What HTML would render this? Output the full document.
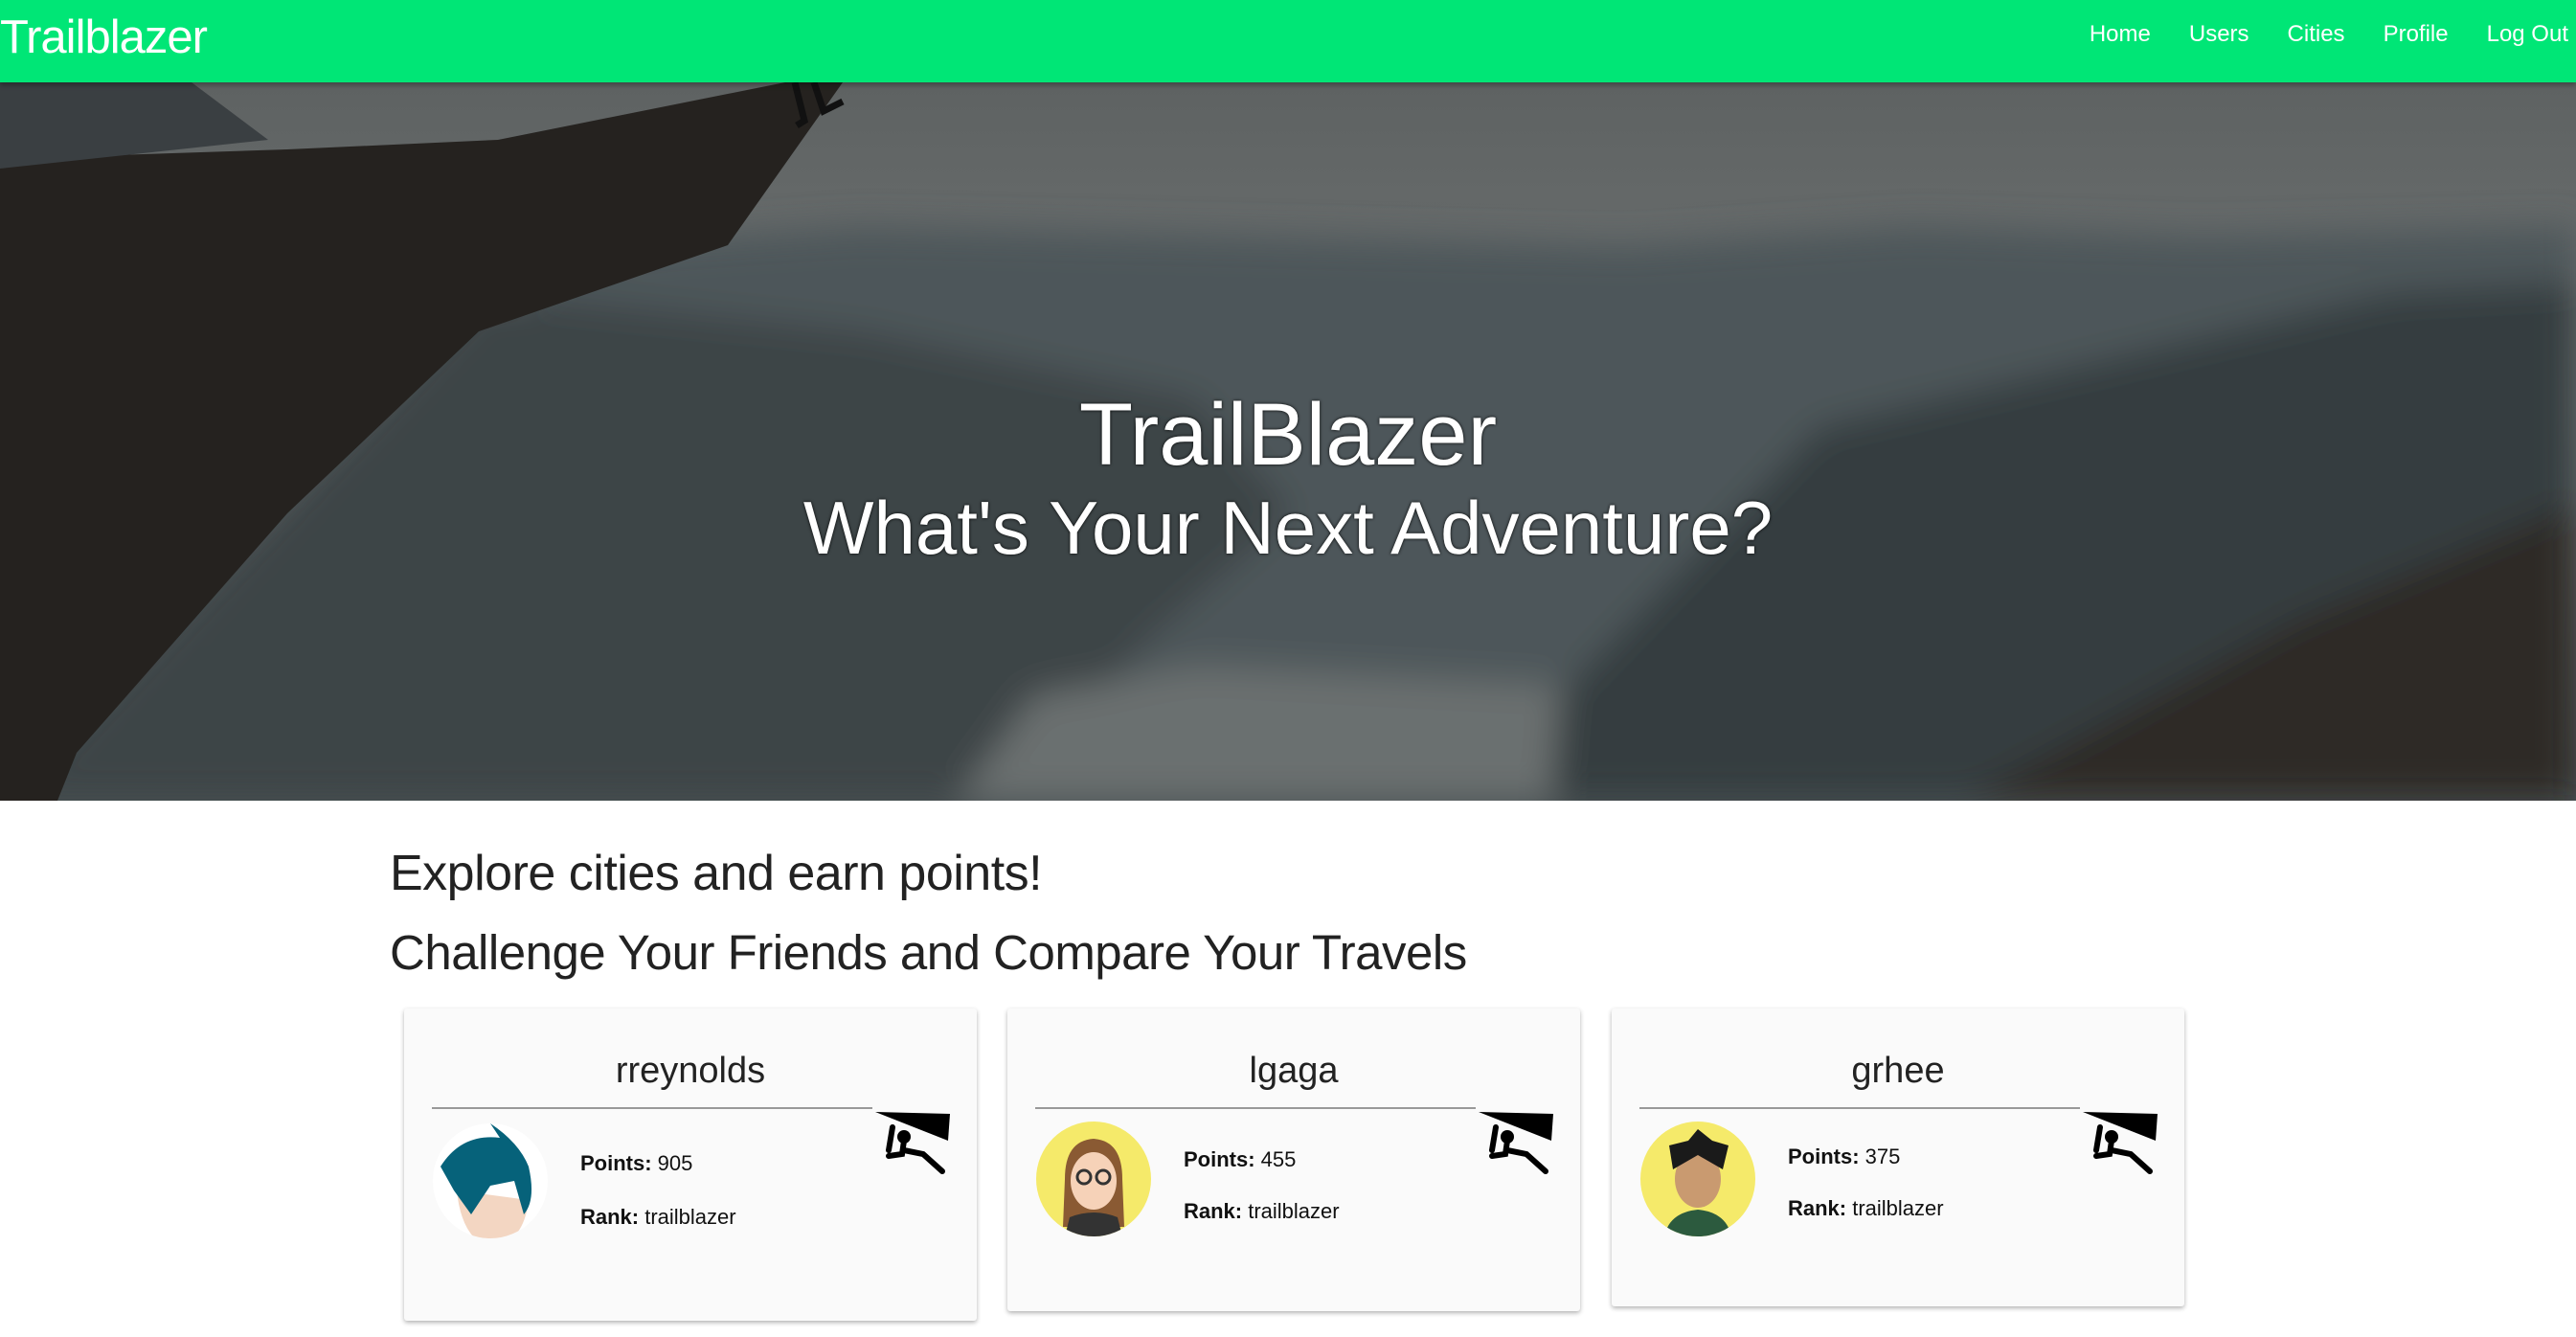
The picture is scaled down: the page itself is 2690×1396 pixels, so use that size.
<!DOCTYPE html>
<html><head><meta charset="utf-8"><style>
*{margin:0;padding:0;box-sizing:border-box}
body{width:2690px;height:1396px;background:#fff;font-family:"Liberation Sans",sans-serif;overflow:hidden;position:relative}
.nav{position:absolute;left:0;top:0;width:2690px;height:86px;background:#00e676;box-shadow:0 3px 5px rgba(0,0,0,.3);z-index:3}
.logo{position:absolute;left:0;top:11px;font-size:49px;color:#fff;letter-spacing:-1px}
.links{position:absolute;right:8px;top:22px;font-size:24px;color:#fff}
.links span{margin-left:40px}
.hero{position:absolute;left:0;top:86px;width:2690px;height:750px;overflow:hidden}
.ht{position:absolute;left:0;width:2690px;text-align:center;color:#fff;text-shadow:0 0 3px #000}
h2{position:absolute;left:407px;font-weight:normal;color:#222;letter-spacing:-0.5px}
.card{position:absolute;background:#fafafa;box-shadow:0 2px 5px rgba(0,0,0,.3);border-radius:3px;width:598px}
.name{position:absolute;left:0;width:598px;top:44px;text-align:center;font-size:38px;color:#222}
.line{position:absolute;left:29px;top:103px;width:460px;height:2px;background:#999}
.av{position:absolute;left:30px;width:120px;height:120px;border-radius:50%;overflow:hidden}
.t{position:absolute;left:184px;font-size:22px;color:#111}
.ic{position:absolute;left:492px;top:108px}
</style></head><body>
<div class="nav"><div class="logo">Trailblazer</div>
<div class="links"><span>Home</span><span>Users</span><span>Cities</span><span>Profile</span><span>Log Out</span></div></div>
<div class="hero">
<svg width="2690" height="750" viewBox="0 0 2690 750">
<defs><linearGradient id="s" x1="0" y1="0" x2="0" y2="1"><stop offset="0" stop-color="#5e6262"/><stop offset="0.45" stop-color="#6f7373"/><stop offset="1" stop-color="#4a5254"/></linearGradient>
<filter id="b"><feGaussianBlur stdDeviation="18"/></filter></defs>
<rect width="2690" height="750" fill="url(#s)"/>
<g filter="url(#b)">
<path d="M600 170 L900 150 L1300 160 L1700 170 L2000 150 L2300 160 L2690 150 L2690 750 L0 750 Z" fill="#4e575a"/>
<path d="M500 220 L900 260 L1250 330 L1350 450 L1200 580 L1050 750 L0 750 Z" fill="#3c4447"/>
<path d="M1620 750 L1620 650 L1900 360 L2200 290 L2500 220 L2690 210 L2690 750 Z" fill="#363d3f"/>
<path d="M2050 750 L2400 560 L2690 440 L2690 750 Z" fill="#2e2b27"/>
<path d="M1000 750 L1080 640 L1250 610 L1630 630 L1620 750 Z" fill="#6a7070"/>
</g>
<path d="M0 80 L300 70 L520 60 L820 0 L880 0 L760 170 L500 260 L300 450 L80 700 L60 750 L0 750 Z" fill="#25221f"/>
<path d="M0 0 L200 0 L280 60 L0 90 Z" fill="#3a3f42"/>
<path d="M830 0 L840 40 L832 45 M850 0 L860 30 L880 20" stroke="#111" stroke-width="7" fill="none"/>
</svg>
<div class="ht" style="top:316px;font-size:92px">TrailBlazer</div>
<div class="ht" style="top:420px;font-size:78px">What's Your Next Adventure?</div>
</div>
<h2 style="top:882px;font-size:52px">Explore cities and earn points!</h2>
<h2 style="top:965px;font-size:51px">Challenge Your Friends and Compare Your Travels</h2>

<div class="card" style="left:422px;top:1053px;height:326px">
<div class="name">rreynolds</div><div class="line"></div>
<div class="av" style="top:120px;background:#fff"><svg width="120" height="140" viewBox="0 0 120 140"><ellipse cx="60" cy="70" rx="55" ry="66" fill="#fff"/><path d="M25 70 Q30 120 60 130 Q95 125 100 80 Z" fill="#f3d6c2"/><path d="M8 45 Q30 10 70 15 L60 0 Q90 20 100 45 Q108 80 95 95 L85 60 L60 65 L40 95 L22 70 Z" fill="#06627a"/></svg></div>
<div class="t" style="top:149px"><b>Points:</b> 905</div>
<div class="t" style="top:205px"><b>Rank:</b> trailblazer</div>
<svg class="ic" width="78" height="66" viewBox="0 0 78 66"><path d="M0 0 L78 2 L76 30 Z" fill="#000"/><circle cx="30" cy="26" r="7" fill="#000"/><path d="M18 16 L14 40 M30 30 L28 44 L14 46 M30 40 L50 44 L70 62" stroke="#000" stroke-width="6" fill="none" stroke-linecap="round"/></svg>
</div>

<div class="card" style="left:1052px;top:1053px;height:316px">
<div class="name">lgaga</div><div class="line"></div>
<div class="av" style="top:118px;background:#f5ea6a"><svg width="120" height="120" viewBox="0 0 120 120"><path d="M30 60 Q30 20 60 18 Q90 20 90 60 L92 110 L28 110 Z" fill="#8a5a33"/><ellipse cx="60" cy="62" rx="24" ry="30" fill="#f6d2b8"/><circle cx="50" cy="58" r="7" fill="none" stroke="#333" stroke-width="3"/><circle cx="70" cy="58" r="7" fill="none" stroke="#333" stroke-width="3"/><path d="M35 100 Q60 90 85 100 L90 120 L30 120Z" fill="#333"/></svg></div>
<div class="t" style="top:145px"><b>Points:</b> 455</div>
<div class="t" style="top:199px"><b>Rank:</b> trailblazer</div>
<svg class="ic" width="78" height="66" viewBox="0 0 78 66"><path d="M0 0 L78 2 L76 30 Z" fill="#000"/><circle cx="30" cy="26" r="7" fill="#000"/><path d="M18 16 L14 40 M30 30 L28 44 L14 46 M30 40 L50 44 L70 62" stroke="#000" stroke-width="6" fill="none" stroke-linecap="round"/></svg>
</div>

<div class="card" style="left:1683px;top:1053px;height:311px">
<div class="name">grhee</div><div class="line"></div>
<div class="av" style="top:118px;background:#f5ea6a"><svg width="120" height="120" viewBox="0 0 120 120"><ellipse cx="60" cy="60" rx="24" ry="30" fill="#c99a70"/><path d="M34 50 L30 25 L50 20 L60 8 L75 20 L92 25 L86 50 L60 35 Z" fill="#1a1a1a"/><path d="M25 120 Q30 95 60 92 Q90 95 95 120Z" fill="#2c5a3e"/></svg></div>
<div class="t" style="top:142px"><b>Points:</b> 375</div>
<div class="t" style="top:196px"><b>Rank:</b> trailblazer</div>
<svg class="ic" width="78" height="66" viewBox="0 0 78 66"><path d="M0 0 L78 2 L76 30 Z" fill="#000"/><circle cx="30" cy="26" r="7" fill="#000"/><path d="M18 16 L14 40 M30 30 L28 44 L14 46 M30 40 L50 44 L70 62" stroke="#000" stroke-width="6" fill="none" stroke-linecap="round"/></svg>
</div>
</body></html>
